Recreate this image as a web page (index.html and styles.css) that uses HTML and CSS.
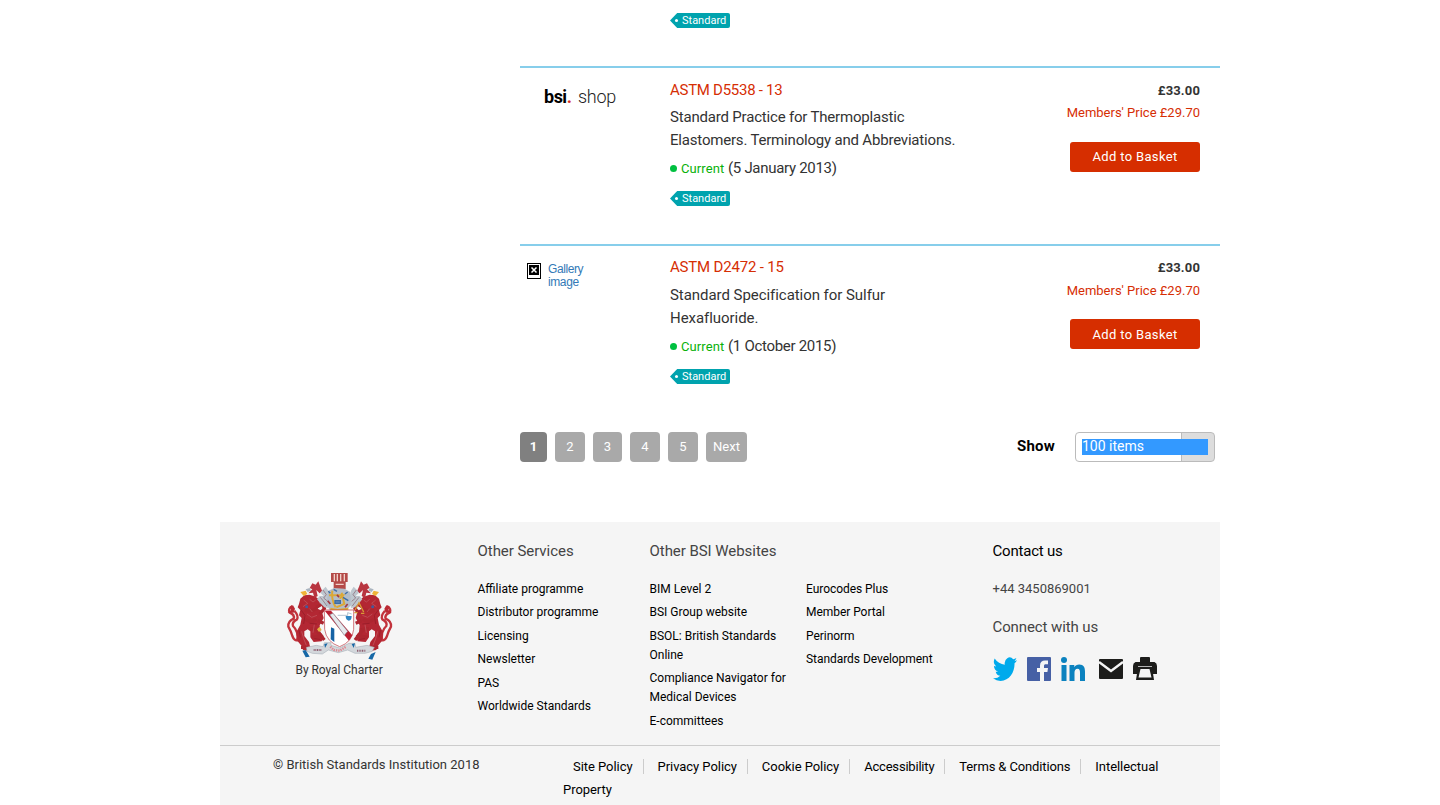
FILE: index.html
```html
<!DOCTYPE html>
<html lang="en">
<head>
<meta charset="utf-8">
<title>BSI Shop</title>
<link rel="stylesheet" href="styles.css">
</head>
<body>
<svg class="defs" width="0" height="0">
<defs>
<g id="lion">
<path d="M52 138Q38 146 44 158Q60 164 56 176Q38 184 40 200Q48 214 52 228Q58 244 68 240M66 244Q72 214 54 198Q50 186 66 178Q72 168 58 152" fill="none" stroke="#c2333c" stroke-width="7"/>
<path d="M38 158L48 150L44 140L54 136L60 146L56 158Z" fill="#bb2a34"/>
<path d="M72 132L76 116L88 106L104 104L122 110L134 120L135 136L128 146L140 152L146 174L134 196L136 216L146 228L140 244L116 246L106 232L106 214L98 208L88 214L88 228L102 246L106 264L98 272L84 270L80 258L68 244L64 216L76 194L80 174L72 166L76 150L68 142Z" fill="#b32733"/>
<path d="M124 142L148 128M144 132L148 146L134 162M110 232L142 226M126 212L148 240M92 178Q106 190 124 178M90 150Q104 158 124 146M78 262H100M128 182L146 190M106 206L132 210" fill="none" stroke="#ad2630" stroke-width="10"/>
<path d="M86 120L98 130L84 140M104 118L114 126L122 120M96 162L110 172L126 166M80 214L86 236L94 256M118 194L114 218M104 146L112 156" fill="none" stroke="#c4636a" stroke-width="1.800"/>
<path d="M78 150L90 166L86 192M104 190L126 192M72 210L76 232M118 236L136 238" fill="none" stroke="#8f1925" stroke-width="2"/>
<circle cx="95" cy="140" r="4.500" fill="#435a9d"/>
<path d="M104 84L112 70L122 74L130 64L136 80L142 94L134 100L124 90L128 108L118 114L114 98L100 100L112 88Z" fill="#b83540"/>
<path d="M76 96L92 92L97 102L86 108Z" fill="#efb338"/>
<path d="M92 88L104 84L108 92L98 96Z" fill="#aab4bf"/>
<path d="M142 90L152 80L160 92L164 112L160 144L148 142L136 130L126 118L134 108L146 108L136 98Z" fill="#bec7cf"/>
<path d="M144 90L154 104L146 114L158 124M136 112L144 122L156 138" fill="none" stroke="#87616c" stroke-width="2"/>
</g>
</defs>
</svg>
<main class="results">
<article class="item first"><span class="tag"><i></i><b>Standard</b></span></article>
<article class="item">
<div class="thumb"><div class="shop"><strong>bsi<em>.</em></strong><span>shop</span></div></div>
<div class="info">
<h3>ASTM D5538 - 13</h3>
<p class="desc">Standard Practice for Thermoplastic<br>Elastomers. Terminology and Abbreviations.</p>
<p class="meta"><i class="dot"></i><span class="current">Current</span><span class="date">(5 January 2013)</span></p>
<span class="tag"><i></i><b>Standard</b></span>
</div>
<div class="buy"><div class="price">£33.00</div><div class="member">Members' Price £29.70</div><a class="add">Add to Basket</a></div>
</article>
<article class="item last">
<div class="thumb missing">
<svg width="14" height="16" viewBox="0 0 14 16"><path d="M0 0H14V16H0Z"/><path d="M1 1H13V15H1Z" fill="#fff"/><path d="M2 2H12V12H2Z"/><path d="M4.500 4.500L9.500 9.500M9.500 4.500L4.500 9.500" stroke="#fff" stroke-width="1.500"/></svg>
<span>Gallery<br>image</span></div>
<div class="info">
<h3>ASTM D2472 - 15</h3>
<p class="desc">Standard Specification for Sulfur<br>Hexafluoride.</p>
<p class="meta"><i class="dot"></i><span class="current">Current</span><span class="date">(1 October 2015)</span></p>
<span class="tag"><i></i><b>Standard</b></span>
</div>
<div class="buy"><div class="price">£33.00</div><div class="member">Members' Price £29.70</div><a class="add">Add to Basket</a></div>
</article>
<nav class="pager">
<a class="on">1</a><a>2</a><a class="three">3</a><a>4</a><a>5</a><a class="next">Next</a>
<label>Show</label><div class="select"><div class="value">100 items</div></div>
</nav>
</main>
<footer class="footer">
<div class="cols">
<div class="charter">
<svg width="110" height="92" viewBox="30 30 330 276">
<use href="#lion"/><use href="#lion" transform="translate(388 0) scale(-1 1)"/>
<path d="M168 39H218V66H212V88H176V66H168Z" fill="#b44a48"/>
<path d="M178 42V64M187 42V64M197 42V64M208 42V64M182 73H206" stroke="#f0cfc8" stroke-width="4"/>
<path d="M160 92L178 84L208 86L226 96L228 136L214 150H164L154 132Z" fill="#b3bdc8"/>
<path d="M162 106H204L194 116M172 92Q168 118 182 142M200 98L208 132L184 142M166 146L188 150L220 146" stroke="#dba936" stroke-width="6" fill="none"/>
<path d="M180 122H196V130H180ZM160 94L166 100M210 102L218 96M176 88L186 94M204 112L220 122" stroke="#3d6da5" stroke-width="4" fill="#5d86b5"/>
<path d="M158 122L166 132M218 132L210 142M186 104L192 112" stroke="#a23a44" stroke-width="5"/>
<path d="M240 150L252 128L266 156M238 158H248M258 160H268" stroke="#d89b35" stroke-width="4" fill="none"/>
<path d="M148 150H236V208Q232 246 194 260Q154 246 149 208Z" fill="#fff" stroke="#bc3540" stroke-width="2"/>
<path d="M149 152H168L232 226L222 242Z" fill="#bb2033"/>
<path d="M164 164L174 160L218 214L208 226Z" fill="#e6eaee" stroke="#76828e" stroke-width="1.500"/>
<path d="M168 202L178 206V246L167 238Z" fill="#1763a5"/>
<path d="M188 166H218V158L230 162" stroke="#8ca5b9" stroke-width="2" fill="none"/><path d="M212 168H230Q230 182 221 182Q212 180 212 168Z" fill="#2e85c4"/>
<path d="M126 208L134 200L140 210L132 216Z" fill="#e6b044"/>
<path d="M94 262L124 256L144 260L148 248H168V256L194 264L222 250H240L242 262L276 256L298 262L292 274L270 280L240 280L218 270L190 278L160 270L142 282L112 280L96 274Z" fill="#d3d7db" stroke="#9ba5ae" stroke-width="1.500"/>
<path d="M116 270H140M246 272H272" stroke="#8e5f70" stroke-width="6" stroke-dasharray="3 2"/>
<path d="M166 260L176 270L194 272L214 260" stroke="#df8790" stroke-width="7" stroke-dasharray="4 3" fill="none"/>
<path d="M82 272L92 270L104 290L92 292ZM302 276L288 282L280 296L292 299ZM148 252L158 250L150 264ZM230 252L240 250L236 264Z" fill="#1768a6"/>
</svg>
<span>By Royal Charter</span>
</div>
<div class="services"><h4>Other Services</h4><ul><li>Affiliate programme</li><li>Distributor programme</li><li>Licensing</li><li>Newsletter</li><li>PAS</li><li>Worldwide Standards</li></ul></div>
<div class="sites"><h4>Other BSI Websites</h4><ul><li>BIM Level 2</li><li>BSI Group website</li><li>BSOL: British Standards<br>Online</li><li>Compliance Navigator for<br>Medical Devices</li><li>E-committees</li></ul></div>
<div class="more"><ul><li>Eurocodes Plus</li><li>Member Portal</li><li>Perinorm</li><li>Standards Development</li></ul></div>
<div class="contact"><h4 class="dark">Contact us</h4><p class="phone">+44 3450869001</p><h4 class="connect">Connect with us</h4>
<div class="social">
<svg width="24" height="24" viewBox="0 0 24 24"><path fill="#00aaec" d="M24 4.560c-.880.390-1.830.650-2.830.770 1.020-.610 1.800-1.570 2.160-2.720-.950.560-2 .970-3.120 1.190a4.920 4.920 0 0 0-8.390 4.490C7.730 8.090 4.100 6.130 1.670 3.150a4.930 4.930 0 0 0 1.520 6.570 4.900 4.900 0 0 1-2.230-.610c-.050 2.280 1.580 4.410 3.950 4.890-.690.190-1.450.230-2.220.080a4.930 4.930 0 0 0 4.600 3.420A9.870 9.870 0 0 1 0 19.540 13.940 13.940 0 0 0 7.550 21.750c9.140 0 14.310-7.720 13.990-14.640A10 10 0 0 0 24 4.560z" transform="translate(0 -2.200) scale(1 1.200)"/></svg>
<svg width="24" height="24" viewBox="0 0 24 24"><rect width="24" height="24" rx="1" fill="#4660a5"/><path fill="#f5f5f5" d="M13 24v-9h-3v-4h3V8.500C13 5.200 15 3.500 18 3.500h3v3.700h-2.200c-1.300 0-1.800.6-1.800 1.800v2h4l-.6 4H17v9z"/></svg>
<svg width="24" height="24" viewBox="0 0 24 24"><path fill="#0b82bf" d="M.5 8h5v16h-5zM8.500 8h4.800v2.200C14.300 8.500 16 7.500 18.200 7.500c4.600 0 5.800 3 5.800 7.200V24h-5v-8.300c0-2-.3-4-2.500-4s-3 1.700-3 4V24h-5z"/><circle cx="3" cy="3" r="3" fill="#0b82bf"/></svg>
<svg class="mail" width="24" height="20" viewBox="0 0 24 20"><rect width="24" height="20" rx="1" fill="#1d1d1b"/><path d="M0 3L12 12L24 3" fill="none" stroke="#f5f5f5" stroke-width="2.400"/></svg>
<svg width="24" height="24" viewBox="0 0 24 24"><path fill="#1d1d1b" d="M7 1Q7 0 8 0h8q1 0 1 1v4h4.500Q24 6 24 9v8h-3.500H3.500H0V9Q0 6 2.500 5H7z"/><path fill="#1d1d1b" d="M5 10h14l2 13H3z"/><path fill="#f5f5f5" d="M7.500 12h9l2 8.500h-13z"/><path stroke="#f5f5f5" stroke-width=".7" d="M5 9.500h14"/></svg>
</div></div>
</div>
<div class="legal"><p class="copy">© British Standards Institution 2018</p>
<div class="links"><div><a>Site Policy</a><a>Privacy Policy</a><a>Cookie Policy</a><a class="access">Accessibility</a><a class="terms">Terms &amp; Conditions</a><a>Intellectual</a></div><span>Property</span></div></div>
</footer>
</body>
</html>
```
FILE: styles.css
```css
*{box-sizing:border-box}
body{margin:0;background:#fff;color:#333;font:15px/23px Roboto,"Noto Sans",sans-serif;height:805px;overflow:hidden}
h3,h4,p,ul{margin:0;padding:0;font-weight:400}
ul{list-style:none}
.defs{display:block;height:0}
.results{width:700px;margin-left:520px}
.item{display:flex;height:178px;border-bottom:2px solid #87ceeb;padding-top:10px}
.first{height:68px;padding:13px 0 0 150px}
.last{border:0;height:186px}
.thumb{width:150px;padding:7px 0 0 24px}
.shop{display:flex;gap:7px;font-size:18px;color:#222;letter-spacing:-.3px}
.shop strong{color:#000;letter-spacing:-.5px;width:27px}
.shop em{color:#d62b1f;font-style:normal}
.shop span{font-weight:300}
.missing{display:flex;gap:7px;padding:7px 0 0 7px;color:#337ab7;font:12px/13px "Liberation Sans",Arial,sans-serif;letter-spacing:-.4px}
.info{width:350px;padding-top:1px}
h3{font-size:15px;color:#d62e04;letter-spacing:-.27px}
.last h3{letter-spacing:-.18px;position:relative;top:-1px}
.desc{margin-top:4px;letter-spacing:-.19px}
.last .desc{letter-spacing:-.05px}
.meta{display:flex;align-items:center;margin-top:5px}
.dot{width:7px;height:7px;border-radius:50%;background:#00c040;margin-right:4px}
.current{font-size:13px;color:#09b109;width:47px;letter-spacing:.1px}
.date{letter-spacing:-.3px}
.tag{display:flex;width:60px;height:15px;margin-top:11px;background:#00a3ae;border-radius:2px;color:#fff;clip-path:polygon(0 50%,12% 0,100% 0,100% 100%,12% 100%);align-items:center;font-size:11px;line-height:15px}
.first .tag{margin:0}
.tag i{width:3px;height:3px;border-radius:50%;background:#fff;margin:0 4px 0 5px}
.tag b{font-weight:400}
.buy{width:180px;text-align:right;font-size:13px;display:flex;flex-direction:column;align-items:flex-end}
.price{font-weight:700;margin-top:1px;letter-spacing:.15px}
.member{color:#d62e04;line-height:22px}
.add{width:130px;height:30px;margin-top:18px;border-radius:3px;background:#d62e00;color:#fff;text-align:center;line-height:30px;letter-spacing:.35px}
.last .price{margin-top:0}
.last .member{line-height:24px}
.last .add{margin-top:16px;line-height:32px}
.pager{display:flex;gap:8px;height:30px}
.pager a{width:30px;border-radius:4px;background:#a9a9a9;color:#fff;font-size:13px;line-height:30px;text-align:center}
.pager .on{width:27px;background:#808080;font-weight:700}
.pager .three{width:29px}
.pager .next{width:41px}
.pager label{margin-left:262px;width:50px;color:#000;font-weight:700;line-height:28px;letter-spacing:.2px}
.select{width:140px;height:30px;border:1px solid #bbb;border-radius:4px;padding:6px;background:linear-gradient(90deg,#fff 105px,#bbb 105px,#bbb 106px,#ddd 106px)}
.value{width:126px;height:16px;background:#39f;color:#fff;font-size:14px;line-height:15px}
.footer{width:1000px;height:283px;margin:60px 0 0 220px;background:#f5f5f5}
.cols{display:flex;height:224px;padding-top:18px;border-bottom:1px solid #ccc}
.charter{width:257.500px;padding:30px 0 0 65px}
.charter svg{display:block}
.charter span{display:block;margin:-1px 0 0 10.500px;font-size:12px;line-height:18px;letter-spacing:-.05px}
h4{font-size:15px;color:#444;letter-spacing:-.05px}
.cols ul{margin-top:17px;color:#000;font-size:12px;line-height:19px}
li{margin-bottom:4.400px;white-space:nowrap}
.services{width:172px}.sites{width:156.500px}.more{width:186.500px;padding-top:23px;letter-spacing:-.05px}
.cols h4.dark{color:#000;letter-spacing:-.2px}
.phone{margin-top:14px;font-size:13px;color:#444}
.cols .connect{margin-top:16px;letter-spacing:-.1px}
.social{display:flex;margin-top:18px}
.social svg{margin-right:10px}
.social .mail{margin:2px 10px 0 4px}
.legal{display:flex;font-size:13px}
.copy{width:343px;padding:7px 0 0 53px}
.links{padding-top:8px;color:#000;letter-spacing:-.05px}
.links div{display:flex;align-items:center;height:24px;padding-left:10px}
.links a{line-height:15px;padding-right:10px;margin-right:14px;border-right:1px solid #ccc;white-space:nowrap}
.links .access{letter-spacing:-.2px}
.links .terms{letter-spacing:-.13px}
.links a:last-child{border:0}
```
